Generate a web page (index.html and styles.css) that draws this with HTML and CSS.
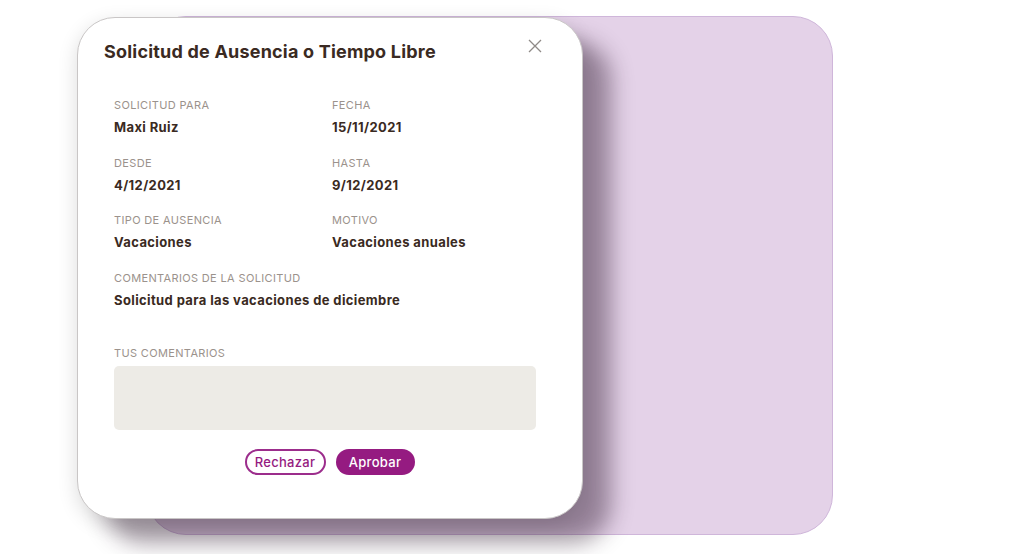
FILE: index.html
```html
<!DOCTYPE html>
<html lang="es">
<head>
<meta charset="utf-8">
<title>Solicitud de Ausencia</title>
<link rel="stylesheet" href="styles.css">
</head>
<body>
<div class="stage">
  <div class="backcard"></div>
  <div class="modal">
    <div class="modal-head">
      <h1 class="title">Solicitud de Ausencia o Tiempo Libre</h1>
      <button class="close" aria-label="Cerrar">
        <svg width="14" height="14" viewBox="0 0 14 14"><path d="M1 1L13 13M13 1L1 13" stroke="#8f8a87" stroke-width="1.3" fill="none"/></svg>
      </button>
    </div>
    <div class="grid">
      <div class="field"><div class="label">Solicitud para</div><div class="value">Maxi Ruiz</div></div>
      <div class="field"><div class="label">Fecha</div><div class="value">15/11/2021</div></div>
      <div class="field"><div class="label">Desde</div><div class="value">4/12/2021</div></div>
      <div class="field"><div class="label">Hasta</div><div class="value">9/12/2021</div></div>
      <div class="field"><div class="label">Tipo de ausencia</div><div class="value">Vacaciones</div></div>
      <div class="field"><div class="label">Motivo</div><div class="value">Vacaciones anuales</div></div>
      <div class="field wide"><div class="label">Comentarios de la solicitud</div><div class="value">Solicitud para las vacaciones de diciembre</div></div>
    </div>
    <div class="comments">
      <div class="label">Tus comentarios</div>
      <div class="textarea"></div>
    </div>
    <div class="actions">
      <button class="btn outline">Rechazar</button>
      <button class="btn solid">Aprobar</button>
    </div>
  </div>
</div>
</body>
</html>
```
FILE: styles.css
```css
html, body {
  margin: 0;
  padding: 0;
  background: #ffffff;
  font-family: Inter, "Noto Sans", sans-serif;
}
.stage {
  position: relative;
  width: 1024px;
  height: 554px;
  overflow: hidden;
  padding: 17px 0 0 77px;
  box-sizing: border-box;
}
.backcard {
  position: absolute;
  left: 146px;
  top: 16px;
  width: 687px;
  height: 519px;
  background: #e4d2e8;
  border: 1px solid #cfb6da;
  border-radius: 40px;
  box-sizing: border-box;
}
.modal {
  position: relative;
  width: 506px;
  height: 502px;
  box-sizing: border-box;
  background: #ffffff;
  border: 1px solid #c9c6c6;
  border-radius: 38px;
  box-shadow: 28px 24px 22px rgba(40, 20, 40, 0.42), 0 6px 20px rgba(0, 0, 0, 0.14);
  padding: 22px 40px 0 26px;
  display: flex;
  flex-direction: column;
}
.modal-head {
  display: flex;
  justify-content: space-between;
  align-items: flex-start;
}
.title {
  margin: 0;
  font-size: 18px;
  font-weight: 700;
  color: #3a2a22;
  line-height: 24px;
  letter-spacing: 0.2px;
}
.close {
  border: 0;
  background: none;
  padding: 0;
  margin: -1px 0 0 0;
  width: 14px;
  height: 14px;
  cursor: pointer;
}
.close svg { display: block; }
.grid {
  display: grid;
  grid-template-columns: 218px 1fr;
  row-gap: 19.6px;
  padding: 0 0 0 10px;
  margin-top: 34px;
}
.wide { grid-column: 1 / 3; }
.label {
  font-size: 11px;
  line-height: 14px;
  color: #9b928c;
  text-transform: uppercase;
  letter-spacing: 0.35px;
}
.value {
  margin-top: 6px;
  font-size: 13px;
  line-height: 18px;
  font-weight: 700;
  color: #3a2a22;
  letter-spacing: 0.38px;
}
.comments {
  padding-left: 10px;
  margin-top: 37px;
}
.textarea {
  margin-top: 6px;
  height: 64px;
  width: 422px;
  background: #edebe6;
  border-radius: 5px;
}
.actions {
  display: flex;
  justify-content: center;
  gap: 10px;
  margin-top: 19px;
  padding-left: 13px;
}
.btn {
  font-family: Inter, "Noto Sans", sans-serif;
  font-size: 13px;
  font-weight: 500;
  letter-spacing: 0.3px;
  height: 26px;
  border-radius: 13px;
  box-sizing: border-box;
  cursor: pointer;
  padding: 0;
}
.outline {
  width: 81px;
  background: #ffffff;
  color: #951b81;
  border: 2px solid #9c2d8c;
}
.solid {
  width: 79px;
  background: #951b81;
  color: #ffffff;
  border: 0;
}
```
